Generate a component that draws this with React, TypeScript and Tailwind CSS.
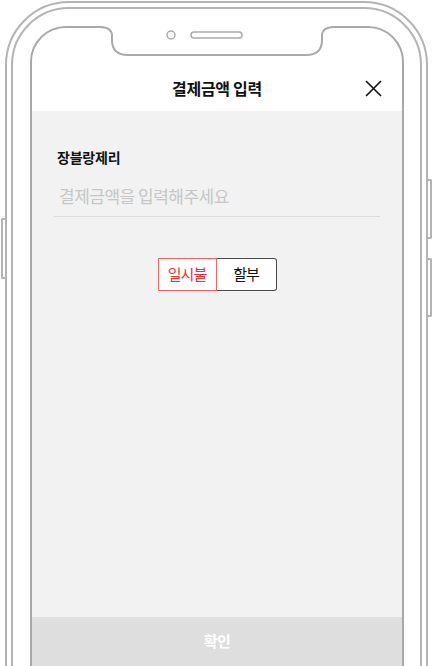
import React from "react";

const kr = { fontFamily: '"Noto Sans CJK KR", "Noto Sans", sans-serif' };

function Notch() {
  return (
    <svg
      className="absolute left-[100px] top-[22px]"
      width="234"
      height="38"
      viewBox="0 0 234 38"
      fill="none"
    >
      <rect x="3" y="0" width="228" height="7" fill="#ffffff" />
      <path
        d="M0 5 C8 5 12 8 12 14 L12 18 Q12 33 28 33 L206 33 Q222 33 222 18 L222 14 C222 8 226 5 234 5"
        stroke="#aaaaaa"
        strokeWidth="2"
        fill="#ffffff"
      />
      <circle cx="71" cy="13" r="4" stroke="#aaaaaa" strokeWidth="1.5" fill="#ffffff" />
      <rect x="91" y="10" width="51" height="6" rx="3" stroke="#aaaaaa" strokeWidth="1.5" fill="#ffffff" />
    </svg>
  );
}

export default function App() {
  return (
    <div className="relative h-[666px] w-[433px] overflow-hidden bg-white" style={kr}>
      {/* side buttons */}
      <div className="absolute left-[1px] top-[218px] h-[61px] w-[5px] rounded-l-[2px] border-2 border-r-0 border-[#b4b4b4]" />
      <div className="absolute left-[427px] top-[179px] h-[60px] w-[5px] rounded-r-[2px] border-2 border-l-0 border-[#b4b4b4]" />
      <div className="absolute left-[427px] top-[258px] h-[59px] w-[5px] rounded-r-[2px] border-2 border-l-0 border-[#b4b4b4]" />

      <div className="ml-[5px] mt-[1px] h-[760px] w-[423px] rounded-[64px] border-2 border-[#b4b4b4] p-[4px]">
        <div className="h-full rounded-[58px] border-2 border-[#b4b4b4] pl-[17px] pr-[16px] pt-[17px]">
          <div className="flex h-full flex-col overflow-hidden rounded-[36px] border-2 border-[#a8a8a8] bg-[#dedede]">
            {/* header */}
            <div className="flex h-[83px] shrink-0 items-start justify-between bg-white px-[20px] pt-[48px]">
              <div className="w-[17px]" />
              <div className="text-[16px] font-bold leading-[24px] tracking-[-0.3px] text-[#111]">
                결제금액 입력
              </div>
              <svg className="mt-[4px]" width="17" height="17" viewBox="0 0 17 17">
                <path d="M1 1 L16 16 M16 1 L1 16" stroke="#111" strokeWidth="1.6" />
              </svg>
            </div>

            {/* body */}
            <div className="h-[506px] shrink-0 bg-[#f2f2f2] px-[22px] pt-[36px]">
              <div className="pl-[3px] text-[14px] font-bold leading-[20px] tracking-[-0.2px] text-[#111]">
                장블랑제리
              </div>
              <div className="mt-[17px] border-b border-[#dcdcdc] pb-[8px] pl-[5px] text-[17px] leading-[24px] tracking-[-0.5px] text-[#c6c6c6]">
                결제금액을 입력해주세요
              </div>
              <div className="mt-[41px] flex justify-center">
                <div className="flex h-[33px] w-[59px] items-center justify-center border border-[#f0646a] bg-white text-[15px] tracking-[-1px] text-[#e8323a]">
                  일시불
                </div>
                <div className="flex h-[33px] w-[60px] items-center justify-center rounded-r-[3px] border border-l-0 border-[#4a4a4a] bg-white text-[15px] tracking-[-1px] text-[#111]">
                  할부
                </div>
              </div>
            </div>

            {/* confirm */}
            <div className="flex h-[48px] shrink-0 items-center justify-center bg-[#dedede] text-[15px] font-bold tracking-[-0.5px] text-white">
              확인
            </div>
          </div>
        </div>
      </div>

      <Notch />
    </div>
  );
}
